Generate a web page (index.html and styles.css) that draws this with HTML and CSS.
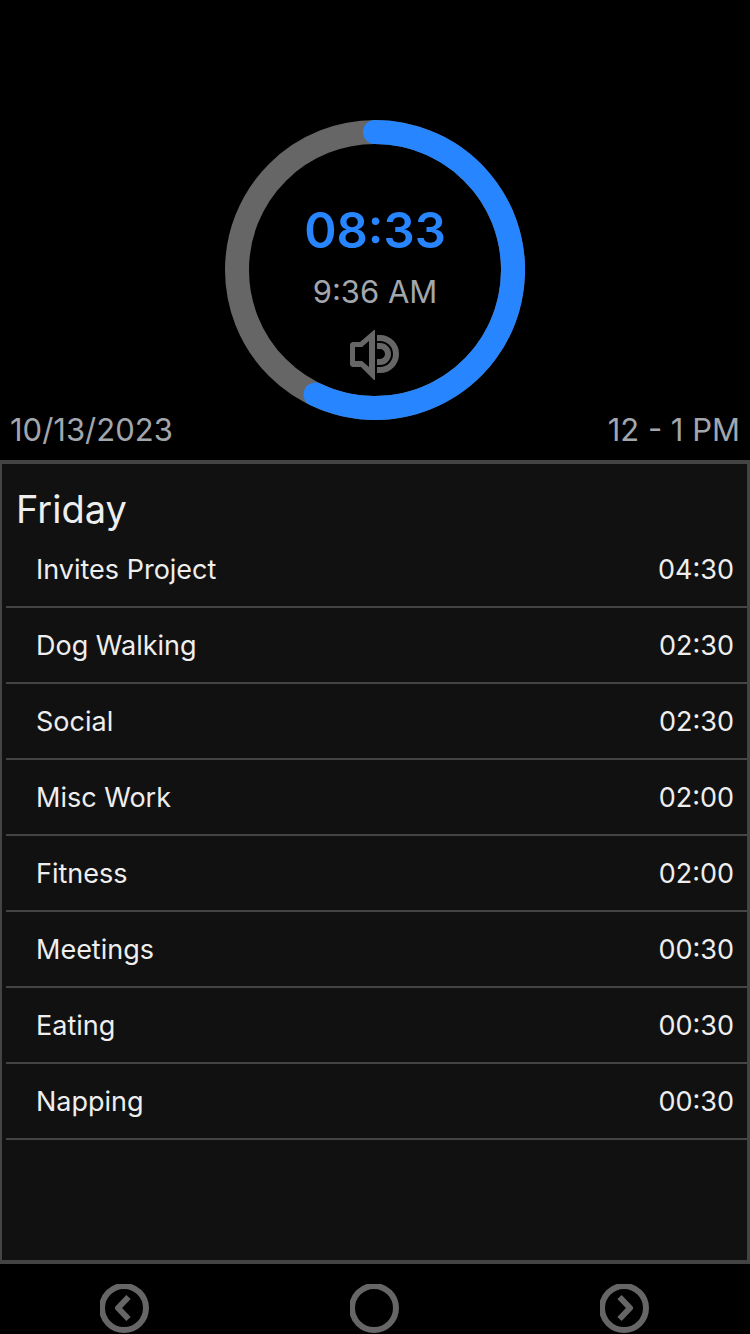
FILE: index.html
```html
<!DOCTYPE html>
<html lang="en">
<head>
<meta charset="utf-8">
<meta name="viewport" content="width=device-width, initial-scale=1">
<title>Friday</title>
<link rel="stylesheet" href="styles.css">
</head>
<body>
<header class="top">
  <div class="meta">10/13/2023</div>
  <div class="timer">
    <svg class="ring" viewBox="0 0 300 300" aria-hidden="true">
      <circle class="ring-track" cx="150" cy="150" r="138"/>
      <path class="ring-value" d="M150 12A138 138 0 1 1 90.5 274.5"/>
    </svg>
    <div class="readout">
      <div class="remaining">08:33</div>
      <div class="clock">9:36 AM</div>
      <button class="icon-button" type="button" aria-label="Sound">
        <svg class="icon" viewBox="0 0 50 50" aria-hidden="true">
          <path class="solid" fill-rule="evenodd" d="M2 12H10L24 0H25V50H24L11 37H2L0 35V14ZM5 17V31H12L19 37V11L12 17Z"/>
          <path class="stroke" d="M27 8H30A16 16 0 0 1 30 40H27M27 16H30A8 8 0 0 1 30 32H27"/>
        </svg>
      </button>
    </div>
  </div>
  <div class="meta meta-end">12 - 1 PM</div>
</header>
<main class="panel">
  <h1 class="day">Friday</h1>
  <ul class="tasks">
    <li class="task"><span>Invites Project</span><span>04:30</span></li>
    <li class="task"><span>Dog Walking</span><span>02:30</span></li>
    <li class="task"><span>Social</span><span>02:30</span></li>
    <li class="task"><span>Misc Work</span><span>02:00</span></li>
    <li class="task"><span>Fitness</span><span>02:00</span></li>
    <li class="task"><span>Meetings</span><span>00:30</span></li>
    <li class="task"><span>Eating</span><span>00:30</span></li>
    <li class="task"><span>Napping</span><span>00:30</span></li>
  </ul>
</main>
<nav class="controls">
  <button class="icon-button" type="button" aria-label="Previous day">
    <svg class="icon" viewBox="0 0 50 50" aria-hidden="true"><circle class="stroke" cx="24" cy="24" r="22"/><path class="stroke" stroke-linejoin="round" d="M28.5 13L18 24L28.5 35"/></svg>
  </button>
  <button class="icon-button" type="button" aria-label="Today">
    <svg class="icon" viewBox="0 0 50 50" aria-hidden="true"><circle class="stroke" cx="24" cy="24" r="22"/></svg>
  </button>
  <button class="icon-button" type="button" aria-label="Next day">
    <svg class="icon" viewBox="0 0 50 50" aria-hidden="true"><circle class="stroke" cx="24" cy="24" r="22"/><path class="stroke" stroke-linejoin="round" d="M19.5 13L30 24L19.5 35"/></svg>
  </button>
</nav>
</body>
</html>
```
FILE: styles.css
```css
* { box-sizing: border-box; }

body {
  display: flex;
  flex-direction: column;
  min-height: 100vh;
  margin: 0;
  background: #000;
  color: #eee;
  font-family: Inter, "Liberation Sans", sans-serif;
}

.top {
  display: grid;
  grid-template-columns: 1fr auto 1fr;
  align-items: end;
  padding: 120px 10px 10px;
}

.meta,
.clock {
  color: #a2a6ad;
  font-size: 31px;
  line-height: 40px;
  white-space: nowrap;
}

.meta-end { text-align: right; }

.timer {
  display: grid;
  justify-items: center;
  margin-bottom: 30px;
}

.ring,
.readout { grid-area: 1 / 1; }

.ring {
  display: block;
  width: 300px;
}

.ring-track,
.ring-value {
  fill: none;
  stroke: #666;
  stroke-width: 24;
}

.ring-value {
  stroke: #2685ff;
  stroke-linecap: round;
}

.readout {
  display: flex;
  flex-direction: column;
  align-items: center;
  padding-top: 81px;
}

.remaining {
  margin-bottom: 11px;
  color: #2685ff;
  font-size: 49px;
  font-weight: 600;
  line-height: 60px;
}

.clock { margin-bottom: 18px; }

.icon-button {
  padding: 0;
  border: 0;
  background: none;
  color: #666;
}

.icon {
  display: block;
  width: 50px;
  height: 50px;
}

.solid { fill: currentColor; }

.stroke {
  fill: none;
  stroke: currentColor;
  stroke-width: 6;
}

.panel {
  flex: 1;
  border: solid #444;
  border-width: 4px 3px 4px 2px;
  background: #111;
}

.day {
  margin: 0;
  padding: 22px 14px 0;
  font-size: 38px;
  font-weight: 400;
  line-height: 46px;
}

.tasks {
  margin: 0;
  padding: 0 0 0 4px;
  list-style: none;
}

.task {
  display: flex;
  justify-content: space-between;
  padding: 21px 13px 19px 30px;
  border-bottom: 2px solid #444;
  font-size: 27px;
  line-height: 34px;
}

.controls {
  display: grid;
  grid-template-columns: repeat(3, 1fr);
  justify-items: center;
  padding-top: 20px;
}
```
